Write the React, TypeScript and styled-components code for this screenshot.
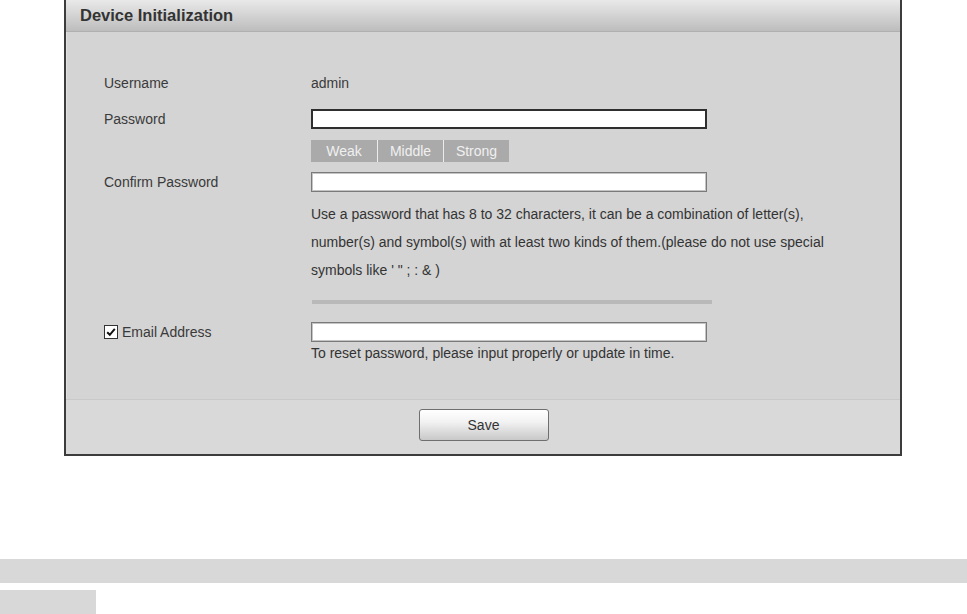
import React from "react";
import styled, { createGlobalStyle } from "styled-components";

const Global = createGlobalStyle`
  html, body { margin: 0; padding: 0; background: #ffffff; }
  body { font-family: "Liberation Sans", Arial, sans-serif; font-size: 14px; color: #333; }
`;

const Page = styled.div`
  width: 967px;
  height: 614px;
  overflow: hidden;
  display: flex;
  flex-direction: column;
`;

const Dialog = styled.div`
  margin-left: 64px;
  width: 834px;
  border: 2px solid #3c3c3c;
  border-top: none;
  background: #d4d4d4;
  display: flex;
  flex-direction: column;
`;

const Header = styled.div`
  height: 32px;
  box-sizing: border-box;
  border-bottom: 1px solid #b0b0b0;
  background: linear-gradient(#e9e9e9, #bdbdbd);
  display: flex;
  align-items: center;
  padding-left: 14px;
  font-size: 16.5px;
  font-weight: bold;
  color: #333;
`;

const Body = styled.div`
  padding: 41px 0 38px 37px;
  display: flex;
  flex-direction: column;
  border-left: 1px solid #e0e0e0;
`;

const Row = styled.div<{ $h: number; $mb: number }>`
  display: flex;
  align-items: flex-start;
  min-height: ${(p) => p.$h}px;
  margin-bottom: ${(p) => p.$mb}px;
`;

const Label = styled.div<{ $h?: number }>`
  width: 207px;
  flex: none;
  height: ${(p) => p.$h ?? 20}px;
  line-height: ${(p) => p.$h ?? 20}px;
  color: #3a3a3a;
  display: flex;
  align-items: center;
  gap: 4px;
`;

const Value = styled.div`
  line-height: 20px;
  color: #3a3a3a;
`;

const Field = styled.div`
  display: flex;
  flex-direction: column;
`;

const Input = styled.input<{ $focus?: boolean }>`
  width: 396px;
  height: 20px;
  box-sizing: border-box;
  margin: 0;
  padding: 0 4px;
  background: #fff;
  outline: none;
  font-family: inherit;
  font-size: 14px;
  border: ${(p) => (p.$focus ? "2px solid #2e2e2e" : "1px solid #7a7a7a")};
  box-shadow: ${(p) => (p.$focus ? "none" : "inset 0 0 0 1px #c4c4c4")};
`;

const Strength = styled.div`
  display: flex;
  height: 22px;
`;

const StrengthItem = styled.div<{ $w: number; $first?: boolean }>`
  width: ${(p) => p.$w}px;
  height: 22px;
  line-height: 22px;
  text-align: center;
  background: #aaaaaa;
  color: #f0f0f0;
  font-size: 14px;
  border-left: ${(p) => (p.$first ? "none" : "1px solid #ececec")};
`;

const Help = styled.div`
  width: 550px;
  line-height: 28px;
  color: #333;
  font-size: 14px;
`;

const Divider = styled.div`
  margin-left: 208px;
  width: 400px;
  height: 4px;
  background: #b9b9b9;
  margin-bottom: 18px;
`;

const Check = styled.span`
  width: 12px;
  height: 12px;
  border: 1px solid #333;
  background: #fff;
  display: inline-flex;
  align-items: center;
  justify-content: center;
  box-sizing: content-box;
`;

const Hint = styled.div`
  line-height: 16px;
  margin-top: 3px;
  color: #333;
  font-size: 14px;
`;

const Footer = styled.div`
  height: 55px;
  box-sizing: border-box;
  border-top: 1px solid #c9c9c9;
  background: #d9d9d9;
  display: flex;
  justify-content: center;
  padding-top: 9px;
  padding-left: 1px;
`;

const Button = styled.button`
  width: 130px;
  height: 32px;
  border: 1px solid #6f6f6f;
  border-radius: 3px;
  background: linear-gradient(#ffffff, #f2f2f2 40%, #c8c8c8);
  font-family: inherit;
  font-size: 14px;
  color: #333;
  padding: 0;
`;

const Bar = styled.div<{ $w: string; $mt: number }>`
  width: ${(p) => p.$w};
  height: 24px;
  background: #d8d8d8;
  margin-top: ${(p) => p.$mt}px;
  flex: none;
`;

export default function App() {
  return (
    <>
      <Global />
      <Page>
        <Dialog>
          <Header>Device Initialization</Header>
          <Body>
            <Row $h={20} $mb={16}>
              <Label>Username</Label>
              <Value>admin</Value>
            </Row>
            <Row $h={20} $mb={11}>
              <Label>Password</Label>
              <Input type="password" $focus />
            </Row>
            <Row $h={22} $mb={10}>
              <Label $h={22} />
              <Strength>
                <StrengthItem $w={66} $first>Weak</StrengthItem>
                <StrengthItem $w={65}>Middle</StrengthItem>
                <StrengthItem $w={65}>Strong</StrengthItem>
              </Strength>
            </Row>
            <Row $h={20} $mb={8}>
              <Label>Confirm Password</Label>
              <Input type="password" />
            </Row>
            <Row $h={84} $mb={16}>
              <Label />
              <Help>
                Use a password that has 8 to 32 characters, it can be a combination of letter(s),
                number(s) and symbol(s) with at least two kinds of them.(please do not use special
                symbols like ' " ; : &amp; )
              </Help>
            </Row>
            <Divider />
            <Row $h={38} $mb={0}>
              <Label>
                <Check>
                  <svg width="10" height="10" viewBox="0 0 10 10">
                    <path d="M1.2 5.2 L3.8 7.8 L8.8 1.8" fill="none" stroke="#111" strokeWidth="2" />
                  </svg>
                </Check>
                Email Address
              </Label>
              <Field>
                <Input type="text" />
                <Hint>To reset password, please input properly or update in time.</Hint>
              </Field>
            </Row>
          </Body>
          <Footer>
            <Button>Save</Button>
          </Footer>
        </Dialog>
        <Bar $w="100%" $mt={103} />
        <Bar $w="96px" $mt={7} />
      </Page>
    </>
  );
}
